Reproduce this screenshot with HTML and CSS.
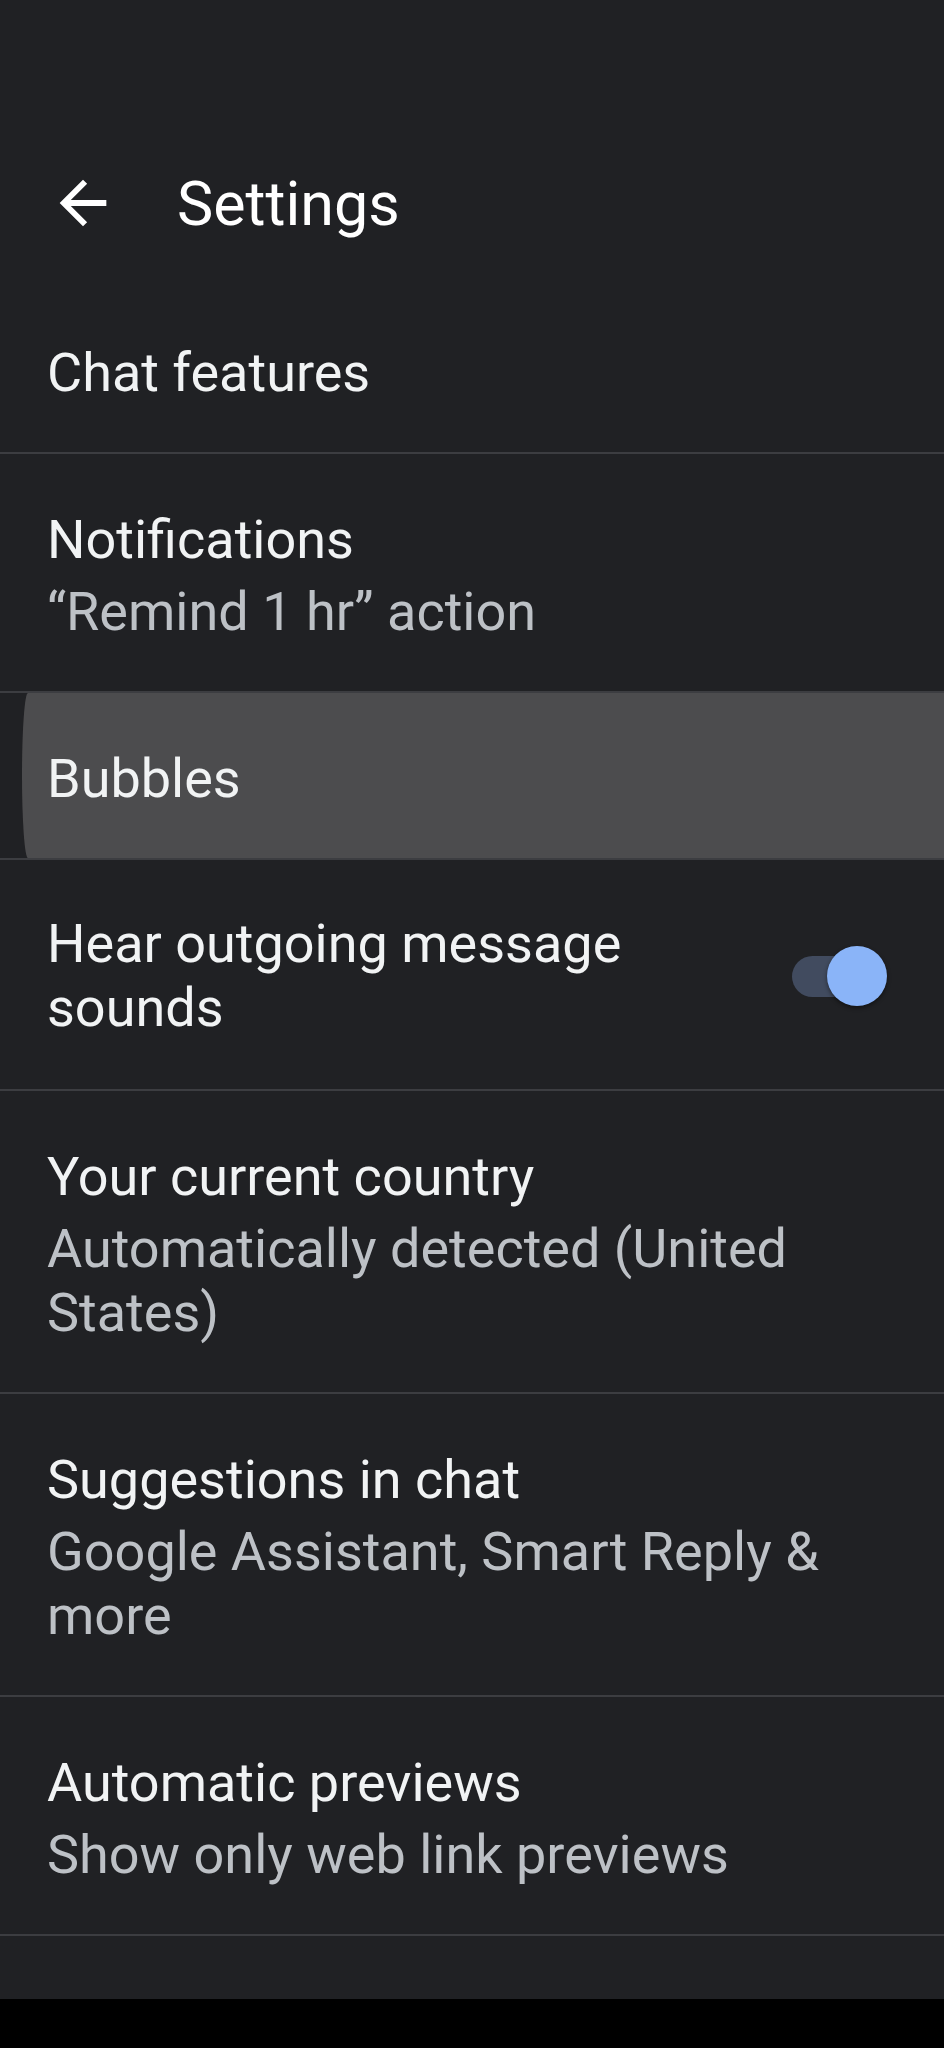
FILE: index.html
```html
<!DOCTYPE html>
<html lang="en">
<head>
    <meta charset="UTF-8">
    <meta name="viewport" content="width=device-width, initial-scale=1.0">
    <title>Settings</title>
    <link rel="stylesheet" href="styles.css">
</head>
<body>

    <div class="screen">
        <header class="appbar">
            <button class="back" aria-label="Back">
                <svg viewBox="0 0 24 24" width="70" height="70"><path d="M20 11H7.83l5.59-5.59L12 4l-8 8 8 8 1.41-1.41L7.83 13H20v-2z" fill="currentColor"/></svg>
            </button>
            <h1 class="title">Settings</h1>
        </header>

        <ul class="prefs">
            <li class="pref">
                <div class="pref-text"><div class="pref-title">Chat features</div></div>
            </li>
            <li class="pref with-summary">
                <div class="pref-text">
                    <div class="pref-title">Notifications</div>
                    <div class="pref-summary">“Remind 1 hr” action</div>
                </div>
            </li>
            <li class="pref pressed">
                <div class="pref-text"><div class="pref-title">Bubbles</div></div>
            </li>
            <li class="pref with-switch">
                <div class="pref-text"><div class="pref-title">Hear outgoing message sounds</div></div>
                <div class="switch on">
                    <span class="track"></span>
                    <span class="thumb"></span>
                </div>
            </li>
            <li class="pref with-summary">
                <div class="pref-text">
                    <div class="pref-title">Your current country</div>
                    <div class="pref-summary">Automatically detected (United States)</div>
                </div>
            </li>
            <li class="pref with-summary">
                <div class="pref-text">
                    <div class="pref-title">Suggestions in chat</div>
                    <div class="pref-summary">Google Assistant, Smart Reply &amp; more</div>
                </div>
            </li>
            <li class="pref with-summary">
                <div class="pref-text">
                    <div class="pref-title">Automatic previews</div>
                    <div class="pref-summary">Show only web link previews</div>
                </div>
            </li>
        </ul>
    </div>

    <div class="navbar"></div>

</body>
</html>
```

FILE: styles.css
```css
body {
    margin: 0;
    background: #000;
    font-family: Roboto, "Noto Sans", Arial, sans-serif;
    color: #f1f3f4;
}
.screen {
    height: 1999px;
    overflow: hidden;
    background: #202124;
}
.navbar {
    height: 49px;
    background: #000;
}

.appbar {
    box-sizing: border-box;
    height: 287px;
    padding-top: 168px;
    display: flex;
    align-items: flex-start;
}
.back {
    margin: 0 0 0 48px;
    padding: 0;
    border: none;
    background: none;
    color: #fff;
    width: 70px;
    height: 70px;
}
.back svg {
    display: block;
}
.title {
    margin: 1px 0 0 59px;
    font-size: 61px;
    line-height: 70px;
    font-weight: 400;
    color: #fff;
}

.prefs {
    list-style: none;
    margin: 0;
    padding: 0;
}
.pref {
    position: relative;
    display: flex;
    align-items: center;
    padding: 54px 48px 47px 47px;
    border-bottom: 2px solid #3c3d41;
}
.pref.with-summary {
    padding-bottom: 47px;
}
.pref.with-switch {
    padding: 52px 57px 49px 47px;
}
.pref-text {
    position: relative;
    flex: 1;
}
.pref-title {
    font-size: 54px;
    line-height: 64px;
}
.pref-summary {
    margin-top: 8px;
    font-size: 54px;
    line-height: 64px;
    color: #bdc1c6;
}

/* ripple left on the pressed row */
.pref.pressed::before {
    content: "";
    position: absolute;
    left: 22px;
    top: 0;
    right: 0;
    bottom: 0;
    background: #4c4c4e;
    border-radius: 6px 0 0 6px / 83px 0 0 83px;
}

.switch {
    position: relative;
    width: 95px;
    height: 60px;
    margin-left: 30px;
    flex-shrink: 0;
}
.switch .track {
    position: absolute;
    left: 0;
    top: 10px;
    width: 88px;
    height: 41px;
    border-radius: 21px;
    background: #414b5f;
}
.switch .thumb {
    position: absolute;
    left: 35px;
    top: 0;
    width: 60px;
    height: 60px;
    border-radius: 50%;
    background: #8ab4f8;
    box-shadow: 0 2px 4px rgba(0, 0, 0, 0.45);
}
```
